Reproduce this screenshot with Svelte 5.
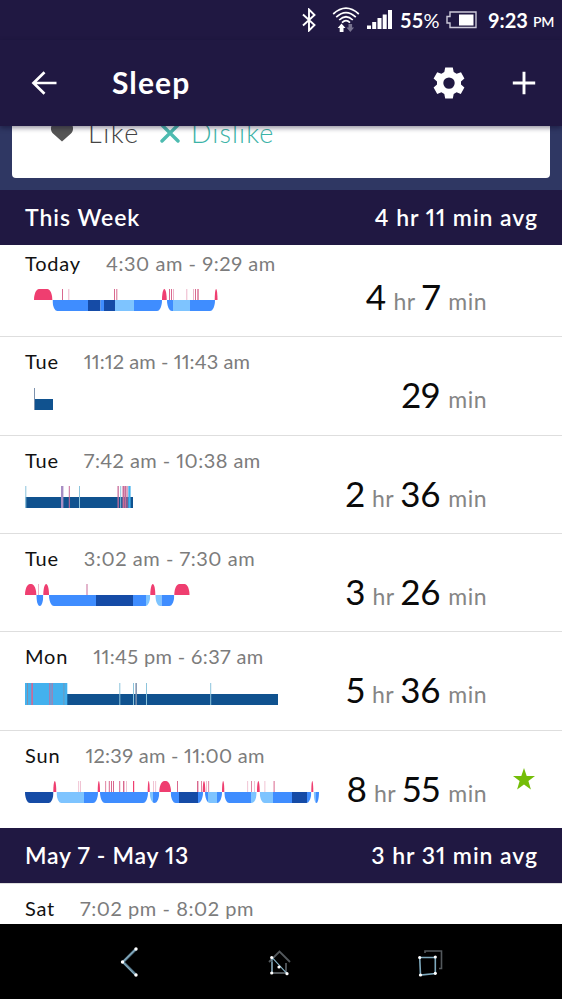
<script lang="ts">
  type Segment = [string, number, number];
  type Tick = [number, number, string];

  interface SleepLog {
    day: string;
    range: string;
    hours?: number;
    minutes?: number;
    star?: boolean;
    classic?: boolean;
    awake?: [number, number][];
    asleep?: Segment[][];
    ticks?: Tick[];
  }

  const colors: Record<string, string> = {
    deep: '#154ba6',
    light: '#3f8dff',
    rem: '#7ec4ff',
    wake: '#ef3e70',
    bar: '#10528f',
    restless: '#43b1ee',
    pale: '#8cc4dc',
    mauve: '#c86c99',
    faint: '#edb5c9',
    rose: '#d9688e',
    violet: '#a78dc4',
    grey: '#7c91ad'
  };

  // All x values are pixels from the left edge of the chart
  const thisWeek: SleepLog[] = [
    {
      day: 'Today',
      range: '4:30 am - 9:29 am',
      hours: 4,
      minutes: 7,
      awake: [[9, 27.3], [137, 141.7], [189.7, 192.5]],
      asleep: [
        [['light', 27.5, 63], ['deep', 63, 75.5], ['light', 75.5, 79], ['deep', 79, 90], ['rem', 90, 109], ['light', 109, 137]],
        [['light', 142, 148], ['rem', 148, 165], ['light', 165, 190]]
      ],
      ticks: [[37, 1, 'rose'], [43.3, 1, 'faint'], [89, 1, 'rose'], [91.3, 1, 'rose'], [144, 1, 'rose'], [146, 1, 'rose'], [148, 1, 'faint'], [161.3, 1, 'faint'], [168, 1, 'faint'], [170, 1, 'rose'], [172.3, 1.4, 'rose']]
    },
    {
      day: 'Tue',
      range: '11:12 am - 11:43 am',
      minutes: 29,
      classic: true,
      asleep: [[['bar', 9.5, 28]]],
      ticks: [[9, 1, 'grey']]
    },
    {
      day: 'Tue',
      range: '7:42 am - 10:38 am',
      hours: 2,
      minutes: 36,
      classic: true,
      asleep: [[['bar', 0.5, 108]]],
      ticks: [[0.3, 1, 'pale'], [36, 2.4, 'violet'], [43.8, 1, 'mauve'], [54, 1, 'pale'], [92.5, 1.3, 'mauve'], [95.2, 1, 'pale'], [97.5, 1.5, 'mauve'], [99.3, 2, 'mauve'], [101.6, 1, 'mauve'], [103.3, 2.3, 'restless']]
    },
    {
      day: 'Tue',
      range: '3:02 am - 7:30 am',
      hours: 3,
      minutes: 26,
      awake: [[0, 11.3], [18.3, 24], [125.3, 130.3], [149.3, 164.5]],
      asleep: [
        [['light', 11.3, 18.3]],
        [['light', 24, 71], ['deep', 71, 108], ['light', 108, 121], ['rem', 121, 125.3]],
        [['rem', 130.3, 136.7], ['light', 136.7, 149.3]]
      ],
      ticks: [[13, 1, 'faint'], [61.5, 1, 'mauve']]
    },
    {
      day: 'Mon',
      range: '11:45 pm - 6:37 am',
      hours: 5,
      minutes: 36,
      classic: true,
      asleep: [[['bar', 42, 253]]],
      ticks: [[0, 42.3, 'restless'], [2, 1, 'grey'], [6.3, 1.7, 'mauve'], [24.3, 1, 'mauve'], [26.6, 1, 'mauve'], [38.5, 0.8, 'grey'], [94.3, 1, 'pale'], [108, 1, 'pale'], [110.4, 1.5, 'grey'], [121, 1, 'pale'], [185.2, 1, 'pale']]
    },
    {
      day: 'Sun',
      range: '12:39 am - 11:00 am',
      hours: 8,
      minutes: 55,
      star: true,
      awake: [[28.3, 31.3], [72.7, 75], [122.7, 124.7], [134.3, 146], [177.7, 180.3], [197, 199.3], [232, 234.7], [286.3, 288.3]],
      asleep: [
        [['deep', 0, 28.5]],
        [['rem', 31.5, 59], ['light', 59, 73]],
        [['light', 75, 123]],
        [['rem', 124.7, 128], ['light', 128, 134.3]],
        [['light', 145.7, 154], ['deep', 154, 173], ['light', 173, 178]],
        [['light', 180, 183], ['rem', 183, 192], ['light', 192, 197]],
        [['light', 199.3, 226], ['rem', 226, 231.7]],
        [['rem', 234.7, 248], ['light', 248, 267], ['deep', 267, 282], ['light', 282, 286.3]],
        [['rem', 288.7, 290.5], ['light', 290.5, 294]]
      ],
      ticks: [[53.3, 0.8, 'faint'], [55.2, 0.8, 'faint'], [80.3, 0.8, 'rose'], [83.8, 1, 'rose'], [86, 1, 'rose'], [88, 1, 'rose'], [94.2, 1, 'rose'], [98, 1.4, 'rose'], [101, 0.8, 'faint'], [108, 1.2, 'wake'], [128, 0.8, 'faint'], [130.3, 0.8, 'faint'], [152, 1, 'rose'], [172, 1.4, 'rose'], [176, 0.8, 'rose'], [181, 0.8, 'faint'], [183.3, 0.8, 'rose'], [222.3, 0.8, 'faint'], [226, 0.8, 'rose'], [229, 0.8, 'faint'], [239.5, 0.8, 'faint'], [248.6, 1, 'rose']]
    }
  ];

  const lastWeek: SleepLog[] = [{ day: 'Sat', range: '7:02 pm - 8:02 pm' }];

  function tracking(text: string) {
    return 0.55 - 0.1 * (text.split('1').length - 1);
  }

  function hump(x1: number, x2: number) {
    const r = Math.min(5, (x2 - x1) / 2);
    return `M${x1} 11C${x1} 5 ${x1 + r * 0.4} 0 ${x1 + r} 0H${x2 - r}C${x2 - r * 0.4} 0 ${x2} 5 ${x2} 11Z`;
  }

  function bowl(x1: number, x2: number) {
    const r = Math.min(5, (x2 - x1) / 2);
    return `M${x1} 11C${x1} 17 ${x1 + r * 0.4} 22 ${x1 + r} 22H${x2 - r}C${x2 - r * 0.4} 22 ${x2} 17 ${x2} 11Z`;
  }
</script>

{#snippet sleepRow(log: SleepLog, id: string)}
  <div class="row">
    <div class="info">
      <div class="when">
        <span class="day">{log.day}</span>
        <span class="range" style:letter-spacing="{tracking(log.range)}px">{log.range}</span>
      </div>
      <svg class="chart" viewBox="0 0 296 22" width="296" height="22">
        {#each log.asleep ?? [] as group, g}
          {@const start = group[0][1]}
          {@const end = group[group.length - 1][2]}
          {#if !log.classic}
            <clipPath id="{id}-{g}"><path d={bowl(start, end)} /></clipPath>
          {/if}
          <g clip-path={log.classic ? undefined : `url(#${id}-${g})`}>
            {#each group as [stage, x1, x2]}
              <rect x={x1} y="11" width={x2 - x1} height="11" fill={colors[stage]} />
            {/each}
          </g>
        {/each}
        {#each log.ticks ?? [] as [x, width, color]}
          <rect {x} y="0" {width} height={log.classic ? 22 : 11} fill={colors[color]} />
        {/each}
        {#each log.awake ?? [] as [x1, x2]}
          <path d={hump(x1, x2)} fill={colors.wake} />
        {/each}
      </svg>
    </div>
    {#if log.minutes}
      <div class="duration">
        {#if log.hours}<b>{log.hours}</b><span class="hr">hr</span>{/if}<b>{log.minutes}</b><span class="min">min</span>
      </div>
    {/if}
    <div class="goal">
      {#if log.star}
        <svg viewBox="0 0 24 24" width="24" height="24">
          <path d="M12 1L14.7 9H23L16.4 14L18.9 22.4L12 17.4L5.1 22.4L7.6 14L1 9H9.3Z" fill="#74bd08" />
        </svg>
      {/if}
    </div>
  </div>
{/snippet}

<div class="screen">
  <div class="status">
    <svg class="bluetooth" viewBox="0 0 14 24" width="14" height="24">
      <path d="M1 6.5L12.5 17L7 22.5V1.5L12.5 7L1 17.5" fill="none" stroke="#fff" stroke-width="1.9" />
    </svg>
    <svg class="wifi" viewBox="0 0 28 26" width="28" height="26">
      <g fill="none" stroke="#fff" stroke-width="1.7">
        <path d="M1.2 7Q14 -4.6 26.8 7" />
        <path d="M4.2 10.2Q14 1 23.8 10.2" />
        <path d="M7.2 13Q14 6.5 20.8 13" />
        <path d="M10 15.6Q14 11.7 18 15.6" />
      </g>
      <path d="M9.5 16.5L13.5 21H11.5V25H7.7V21H5.7Z" fill="#fff" />
      <path d="M18.3 25L14.5 20.5H16.5V17H20.1V20.5H22.1Z" fill="#77728f" />
    </svg>
    <svg class="signal" viewBox="0 0 25 20" width="25" height="20" fill="#fff">
      <rect x="0" y="15.5" width="4" height="3.5" />
      <rect x="5.2" y="12" width="4" height="7" />
      <rect x="10.5" y="8" width="4" height="11" />
      <rect x="15.7" y="4.5" width="4" height="14.5" />
      <rect x="21" y="0" width="4" height="19" />
    </svg>
    <span class="percent">55<i>%</i></span>
    <svg class="battery" viewBox="0 0 31 18" width="31" height="18">
      <path d="M4 1H30V16.5H4V12H1V5.5H4Z" fill="none" stroke="#cbc8d8" stroke-width="1.4" />
      <rect x="13" y="3.5" width="14.5" height="11" fill="#fff" />
    </svg>
    <span class="clock">9:23</span>
    <span class="pm">PM</span>
  </div>

  <header>
    <svg class="back" viewBox="0 0 26 24" width="26" height="24">
      <path d="M13.5 1.2L2.5 12L13.5 22.8M2.5 12H25.5" fill="none" stroke="#fff" stroke-width="2.7" />
    </svg>
    <h1>Sleep</h1>
    <svg class="gear" viewBox="0 0 32 32" width="32" height="32">
      <path
        fill="#fff"
        fill-rule="evenodd"
        d="M12.2 0.5H19.8L20.7 5.1L23.6 6.8L28 5.2L31.4 11.6L28 14.6V17.6L31.4 20.6L27.8 27L23.6 25.3L20.7 27L19.8 31.5H12.2L11.3 27L8.4 25.3L4.2 27L0.6 20.6L4 17.6V14.6L0.6 11.6L4.2 5.2L8.4 6.8L11.3 5.1ZM16 10.4A5.7 5.7 0 1 0 16 21.8A5.7 5.7 0 1 0 16 10.4Z"
      />
    </svg>
    <svg class="plus" viewBox="0 0 24 24" width="24" height="24">
      <path d="M12 0.8V23.2M0.8 12H23.2" stroke="#fff" stroke-width="2.9" />
    </svg>
  </header>

  <div class="feedback">
    <div class="card">
      <svg class="heart" viewBox="0 0 24 20" width="24" height="20">
        <path d="M12 19.5L3 11.5C-0.5 8 0.5 1 6 0.5C9 0.3 11 2 12 3.5C13 2 15 0.3 18 0.5C23.5 1 24.5 8 21 11.5Z" fill="#555" />
      </svg>
      <span class="like">Like</span>
      <svg class="cross" viewBox="0 0 20 20" width="20" height="20">
        <path d="M2 2L18 18M18 2L2 18" stroke="#4dbbb0" stroke-width="3.4" stroke-linecap="round" />
      </svg>
      <span class="dislike">Dislike</span>
    </div>
  </div>

  <div class="week">
    <span class="this-week">This Week</span>
    <span class="avg">4 hr 11 min avg</span>
  </div>
  <div class="rows scrolled">
    {#each thisWeek as log, i}
      {@render sleepRow(log, `log${i}`)}
    {/each}
  </div>

  <div class="week">
    <span class="dates">May 7 - May 13</span>
    <span class="avg">3 hr 31 min avg</span>
  </div>
  <div class="rows last">
    {#each lastWeek as log, i}
      {@render sleepRow(log, `last${i}`)}
    {/each}
  </div>

  <nav>
    <svg viewBox="0 0 40 40" width="40" height="40">
      <path d="M27 7L14 20L27 33" fill="none" stroke="#5b7f93" stroke-width="2.6" />
      <path d="M26.3 7.5L13.5 20L26.3 33" fill="none" stroke="#a9cfdf" stroke-width="0.8" />
      <g fill="#fff"><circle cx="27" cy="7" r="1.7" /><circle cx="13.5" cy="20" r="1.7" /><circle cx="27" cy="33" r="1.7" /></g>
    </svg>
    <svg viewBox="0 0 40 40" width="40" height="40">
      <path d="M10 20L20.5 9.5L31 20M13 20V31H27V21" fill="none" stroke="#53585c" stroke-width="1.8" />
      <path d="M13 31V15.5L28 31.7" fill="none" stroke="#88b5ca" stroke-width="1.1" />
      <g fill="#fff"><circle cx="12.7" cy="15.5" r="1.6" /><circle cx="20" cy="25" r="1.6" /><circle cx="12.7" cy="31" r="1.6" /><circle cx="28" cy="31.7" r="1.6" /></g>
    </svg>
    <svg viewBox="0 0 40 40" width="40" height="40">
      <path d="M16 11V9H32.5V26.5H30" fill="none" stroke="#53585c" stroke-width="1.6" />
      <path d="M10.7 15.5H26.3V31.5L11.5 33Z" fill="none" stroke="#7ea9bd" stroke-width="1.6" />
      <g fill="#fff"><circle cx="10.7" cy="15.5" r="1.6" /><circle cx="26.3" cy="15" r="1.6" /><circle cx="26.3" cy="31.3" r="1.6" /><circle cx="11.5" cy="33" r="1.6" /></g>
    </svg>
  </nav>
</div>

<style>
  :global(body) {
    margin: 0;
    background: #000;
  }

  .screen {
    width: 562px;
    height: 999px;
    overflow: hidden;
    display: flex;
    flex-direction: column;
    font-family: Lato, 'Open Sans', sans-serif;
    background: #fff;
  }

  .screen > * {
    flex-shrink: 0;
    box-sizing: border-box;
  }

  svg {
    display: block;
    flex-shrink: 0;
  }

  .status {
    height: 40px;
    display: flex;
    align-items: center;
    padding-left: 302px;
    color: #fff;
    background: #201842;
    white-space: nowrap;
  }

  .wifi {
    margin-left: 16px;
    margin-top: -1px;
  }

  .signal {
    margin-left: 7px;
  }

  .percent {
    width: 39px;
    margin-left: 8px;
    font-size: 20px;
    font-weight: 700;
    letter-spacing: 0.2px;
  }

  .percent i {
    font-style: normal;
    font-weight: 400;
  }

  .battery {
    margin-left: 7px;
  }

  .clock {
    width: 40px;
    margin-left: 11px;
    font-size: 20px;
    font-weight: 700;
  }

  .pm {
    margin-left: 5px;
    margin-top: 3px;
    font-size: 14px;
    font-weight: 600;
    letter-spacing: -0.3px;
  }

  header {
    position: relative;
    z-index: 1;
    height: 86px;
    display: flex;
    align-items: center;
    padding-left: 31px;
    color: #fff;
    background: #201842;
    box-shadow: 0 2px 5px rgba(10, 5, 35, 0.45);
  }

  h1 {
    width: 321px;
    margin: -2px 0 0 55px;
    font-size: 30px;
    line-height: 36px;
    font-weight: 700;
    letter-spacing: 1.1px;
  }

  .plus {
    margin-left: 47px;
  }

  .feedback {
    height: 64px;
    padding: 0 12px;
    background: #2f3763;
  }

  .card {
    height: 52px;
    box-sizing: border-box;
    display: flex;
    align-items: flex-start;
    padding-left: 38px;
    border-radius: 0 0 4px 4px;
    background: #fff;
    font-size: 27px;
    line-height: 32px;
    font-weight: 300;
    letter-spacing: 1.1px;
    overflow: hidden;
  }

  .heart {
    margin-top: -4px;
  }

  .like,
  .dislike {
    margin-top: -9px;
  }

  .like {
    width: 52px;
    margin-left: 14px;
    letter-spacing: 1.5px;
    color: #444;
  }

  .cross {
    margin-left: 20px;
    margin-top: -3px;
  }

  .dislike {
    margin-left: 11px;
    color: #3bb3a7;
  }

  .week {
    position: relative;
    z-index: 1;
    height: 55px;
    display: flex;
    justify-content: space-between;
    align-items: center;
    padding: 0 24px 1px 25px;
    color: #fff;
    background: #201842;
    font-size: 23px;
    font-weight: 600;
    letter-spacing: 0.95px;
    font-variant-numeric: proportional-nums;
  }

  .dates {
    letter-spacing: 0.7px;
  }

  .scrolled {
    height: 583px;
    display: flex;
    flex-direction: column;
    justify-content: flex-end;
    overflow: hidden;
  }

  .last {
    height: 41px;
    overflow: hidden;
  }

  .row {
    flex-shrink: 0;
    height: 98.33px;
    box-sizing: border-box;
    display: flex;
    padding-left: 25px;
    border-top: 1px solid #dedede;
    background: #fff;
  }

  .info {
    width: 296px;
    padding-top: 12px;
  }

  .when {
    display: flex;
    gap: 25px;
    height: 24px;
    font-size: 20px;
    line-height: 24px;
    white-space: nowrap;
    font-variant-numeric: proportional-nums;
  }

  .day {
    color: #111;
    letter-spacing: 0.8px;
  }

  .range {
    color: #7c7c7c;
  }

  .chart {
    margin-top: 14.4px;
  }

  .duration {
    width: 166px;
    padding-top: 35px;
    text-align: right;
    line-height: 44px;
    white-space: nowrap;
    font-size: 23px;
    letter-spacing: 0.5px;
    color: #858585;
    font-variant-numeric: proportional-nums;
  }

  .duration b {
    font-size: 35px;
    font-weight: 400;
    letter-spacing: 0;
    color: #0a0a0a;
  }

  .hr {
    margin: 0 6px 0 7px;
  }

  .min {
    margin-left: 8px;
  }

  .goal {
    margin-left: 25px;
    padding-top: 36px;
  }

  nav {
    height: 75px;
    display: flex;
    justify-content: center;
    align-items: center;
    gap: 110px;
    padding-right: 4px;
    background: #000;
  }
</style>
